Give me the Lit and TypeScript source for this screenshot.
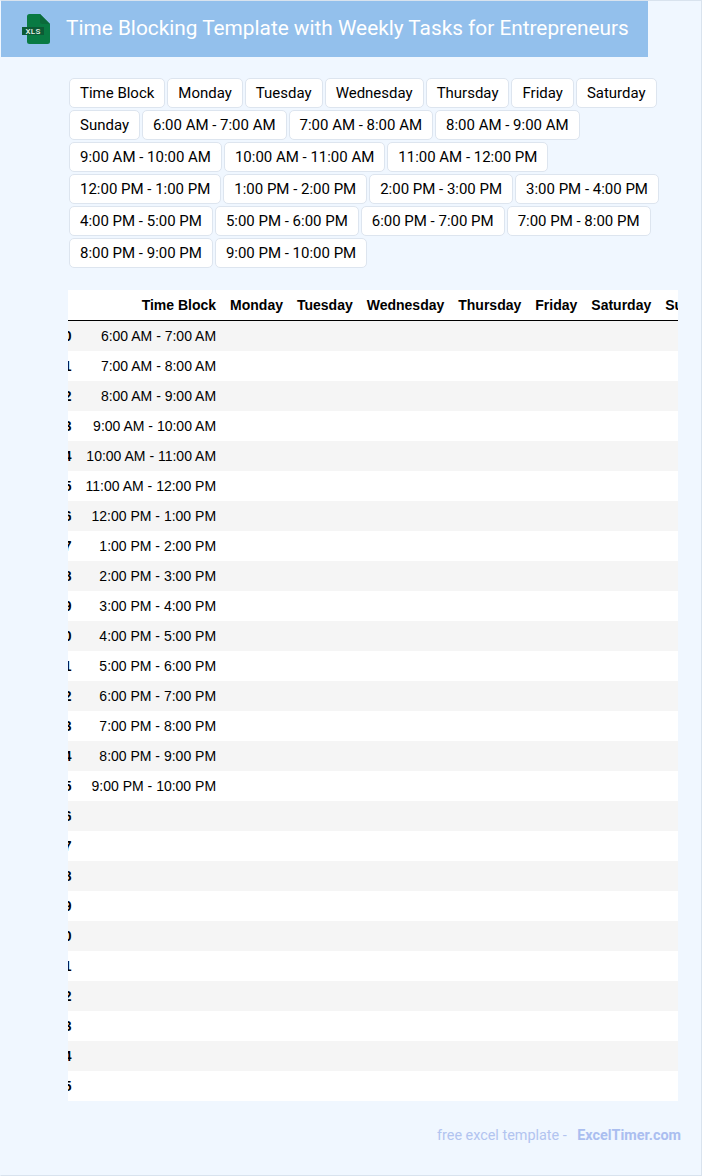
import { LitElement, html, css } from "lit";
import { customElement } from "lit/decorators.js";

const days = ["Monday", "Tuesday", "Wednesday", "Thursday", "Friday", "Saturday", "Sunday"];
const hours = [
  "6:00 AM - 7:00 AM", "7:00 AM - 8:00 AM", "8:00 AM - 9:00 AM", "9:00 AM - 10:00 AM",
  "10:00 AM - 11:00 AM", "11:00 AM - 12:00 PM", "12:00 PM - 1:00 PM", "1:00 PM - 2:00 PM",
  "2:00 PM - 3:00 PM", "3:00 PM - 4:00 PM", "4:00 PM - 5:00 PM", "5:00 PM - 6:00 PM",
  "6:00 PM - 7:00 PM", "7:00 PM - 8:00 PM", "8:00 PM - 9:00 PM", "9:00 PM - 10:00 PM",
];
const rows = Array.from({ length: 26 }, (_, i) => ({ n: i + 10, t: hours[i] ?? "" }));

@customElement("app-root")
export class AppRoot extends LitElement {
  static styles = css`
    :host { display: block; }
    .page {
      box-sizing: border-box; width: 702px; height: 1176px; background: #f0f7ff;
      border: 1px solid #d9e3ee; border-left-color: #f0f7ff; font-family: Roboto, sans-serif;
      display: flex; flex-direction: column; overflow: hidden;
    }
    .head {
      width: 647px; height: 56px; box-sizing: border-box; background: #93c0ec;
      display: flex; align-items: center; padding-left: 21px; gap: 15px; flex: none;
    }
    .logo { width: 29px; height: 30px; flex: none; display: block; }
    h1 { margin: 0 0 3px; color: #fff; font-size: 20.8px; font-weight: 400; white-space: nowrap; }
    .chips {
      display: flex; flex-wrap: wrap; gap: 2px; margin: 21px 0 0 68px; width: 612px; flex: none;
    }
    .chip {
      box-sizing: border-box; height: 30px; padding: 1px 10px 0; background: #fff; border: 1px solid #dde5ef;
      border-radius: 5px; font-size: 14.995px; line-height: 27px; color: #000; white-space: nowrap;
    }
    .wrap { margin: 22px 0 0 67px; width: 610px; height: 811px; overflow: hidden; flex: none; background: #fff; }
    table {
      border-collapse: separate; border-spacing: 0; margin-left: -19px; font-family: "Liberation Sans", Arial, sans-serif;
      font-size: 14px; color: #000;
    }
    th, td { height: 30px; padding: 0 7px; box-sizing: border-box; text-align: right; white-space: nowrap; }
    th { font-weight: 700; height: 31px; border-bottom: 1px solid #000; }
    td.n { font-weight: 700; }
    tbody tr:nth-child(odd) td { background: #f5f5f5; }
    tbody tr:nth-child(even) td { background: #fff; }
    .foot {
      margin: 26px 0 0 436px; font-size: 14.4px; line-height: 18px; color: #b2c4f0; white-space: nowrap; flex: none;
    }
    .foot b { font-weight: 700; color: #aabef0; margin-left: 7px; }
  `;

  render() {
    return html`<div class="page">
      <header class="head">
        <svg class="logo" viewBox="0 0 29 30">
          <path d="M5 2.500A2.500 2.500 0 0 1 7.500 0H18l10 10v17.500A2.500 2.500 0 0 1 25.500 30h-18A2.500 2.500 0 0 1 5 27.500Z" fill="#097a43"/>
          <path d="M18 0l10 10h-7.500A2.500 2.500 0 0 1 18 7.500Z" fill="#0b6a3b"/>
          <rect x="0" y="13" width="22" height="8" fill="#0c5a35"/>
          <text x="11" y="20" text-anchor="middle" font-family="Roboto, sans-serif" font-size="8" letter-spacing="0.300" font-weight="500" fill="#e8f3ec">XLS</text>
        </svg>
        <h1>Time Blocking Template with Weekly Tasks for Entrepreneurs</h1>
      </header>
      <div class="chips">
        ${["Time Block", ...days, ...hours].map((c) => html`<span class="chip">${c}</span>`)}
      </div>
      <div class="wrap">
        <table>
          <thead>
            <tr>
              <th></th><th>Time Block</th>
              ${days.map((d) => html`<th>${d}</th>`)}
            </tr>
          </thead>
          <tbody>
            ${rows.map((r) => html`<tr>
              <td class="n">${r.n}</td><td>${r.t}</td>
              ${days.map(() => html`<td></td>`)}
            </tr>`)}
          </tbody>
        </table>
      </div>
      <div class="foot">free excel template - <b>ExcelTimer.com</b></div>
    </div>`;
  }
}
